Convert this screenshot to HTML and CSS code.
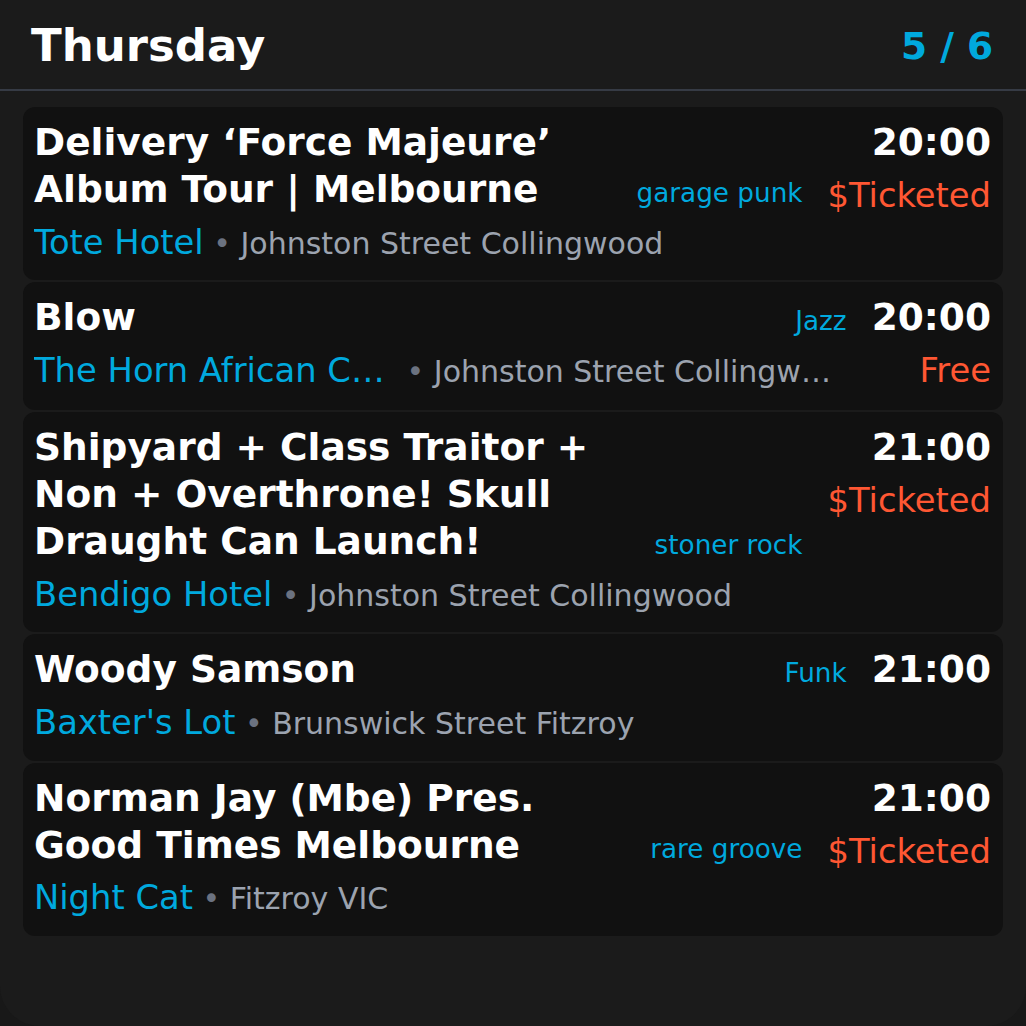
FILE: index.html
```html
<!DOCTYPE html>
<html lang="en">
<head>
<meta charset="utf-8">
<title>Thursday</title>
<link rel="stylesheet" href="styles.css">
</head>
<body>
<div class="app">
  <header class="header">
    <h1 class="day">Thursday</h1>
    <div class="pager">5 / 6</div>
  </header>
  <main class="list">
    <article class="card">
      <div class="main">
        <div class="head">
          <h2 class="title">Delivery ‘Force Majeure’ Album Tour | Melbourne</h2>
          <span class="tag">garage punk</span>
        </div>
        <div class="meta"><span class="venue">Tote Hotel</span><span class="loc"><span class="dot">&nbsp;•&nbsp;</span>Johnston Street Collingwood</span></div>
      </div>
      <div class="side">
        <div class="time">20:00</div>
        <div class="price">$Ticketed</div>
      </div>
    </article>
    <article class="card">
      <div class="main">
        <div class="head">
          <h2 class="title">Blow</h2>
          <span class="tag">Jazz</span>
        </div>
        <div class="meta"><span class="venue">The Horn African Cafe</span><span class="loc"><span class="dot">&nbsp;•&nbsp;</span>Johnston Street Collingwood</span></div>
      </div>
      <div class="side">
        <div class="time">20:00</div>
        <div class="price">Free</div>
      </div>
    </article>
    <article class="card">
      <div class="main">
        <div class="head">
          <h2 class="title">Shipyard + Class Traitor + Non + Overthrone! Skull Draught Can Launch!</h2>
          <span class="tag">stoner rock</span>
        </div>
        <div class="meta"><span class="venue">Bendigo Hotel</span><span class="loc"><span class="dot">&nbsp;•&nbsp;</span>Johnston Street Collingwood</span></div>
      </div>
      <div class="side">
        <div class="time">21:00</div>
        <div class="price">$Ticketed</div>
      </div>
    </article>
    <article class="card">
      <div class="main">
        <div class="head">
          <h2 class="title">Woody Samson</h2>
          <span class="tag">Funk</span>
        </div>
        <div class="meta"><span class="venue">Baxter's Lot</span><span class="loc"><span class="dot">&nbsp;•&nbsp;</span>Brunswick Street Fitzroy</span></div>
      </div>
      <div class="side">
        <div class="time">21:00</div>
      </div>
    </article>
    <article class="card">
      <div class="main">
        <div class="head">
          <h2 class="title">Norman Jay (Mbe) Pres. Good Times Melbourne</h2>
          <span class="tag">rare groove</span>
        </div>
        <div class="meta"><span class="venue">Night Cat</span><span class="loc"><span class="dot">&nbsp;•&nbsp;</span>Fitzroy VIC</span></div>
      </div>
      <div class="side">
        <div class="time">21:00</div>
        <div class="price">$Ticketed</div>
      </div>
    </article>
  </main>
</div>
</body>
</html>
```

FILE: styles.css
```css
html, body {
  margin: 0;
  padding: 0;
  background: #181818;
}

body {
  font-family: "DejaVu Sans", "Liberation Sans", sans-serif;
  color: #ffffff;
}

.app {
  box-sizing: border-box;
  min-height: 1026px;
  background: #1b1b1b;
  border-radius: 0 0 40px 40px;
}

.header {
  display: flex;
  justify-content: space-between;
  align-items: center;
  padding: 19px 33px 16px 31px;
  border-bottom: 2px solid #363b45;
}

.day {
  margin: 0;
  font-size: 45px;
  font-weight: 700;
  line-height: 1.2;
  color: #ffffff;
}

.pager {
  font-size: 37.5px;
  font-weight: 700;
  line-height: 1.2;
  color: #00a9de;
}

.list {
  display: flex;
  flex-direction: column;
  gap: 2px;
  padding: 16px 23px;
}

.card {
  display: grid;
  grid-template-columns: minmax(0, 1fr) auto;
  column-gap: 25px;
  padding: 12px 12px 12px 11px;
  background: #111111;
  border-radius: 12px;
}

.main {
  min-width: 0;
}

.head {
  display: flex;
  justify-content: space-between;
  align-items: last baseline;
  gap: 24px;
}

.title {
  margin: 0;
  font-size: 37.5px;
  font-weight: 700;
  line-height: 1.25;
  color: #ffffff;
}

.tag {
  flex-shrink: 0;
  white-space: nowrap;
  font-size: 26.25px;
  line-height: 1.25;
  color: #00a9de;
}

.meta {
  display: flex;
  align-items: baseline;
  margin-top: 5px;
  line-height: 1.5;
  white-space: nowrap;
  min-width: 0;
}

.venue {
  flex-shrink: 0;
  max-width: 363px;
  overflow: hidden;
  text-overflow: ellipsis;
  font-size: 33.75px;
  color: #00a9de;
}

.loc {
  min-width: 0;
  overflow: hidden;
  text-overflow: ellipsis;
  font-size: 30px;
  color: #9ca3af;
}

.dot {
  color: #6b7280;
}

.side {
  display: flex;
  flex-direction: column;
  align-items: flex-end;
}

.time {
  font-size: 37.5px;
  font-weight: 700;
  line-height: 1.25;
  color: #ffffff;
}

.price {
  margin-top: 4px;
  font-size: 33.75px;
  line-height: 1.56;
  color: #ff5733;
}
```
